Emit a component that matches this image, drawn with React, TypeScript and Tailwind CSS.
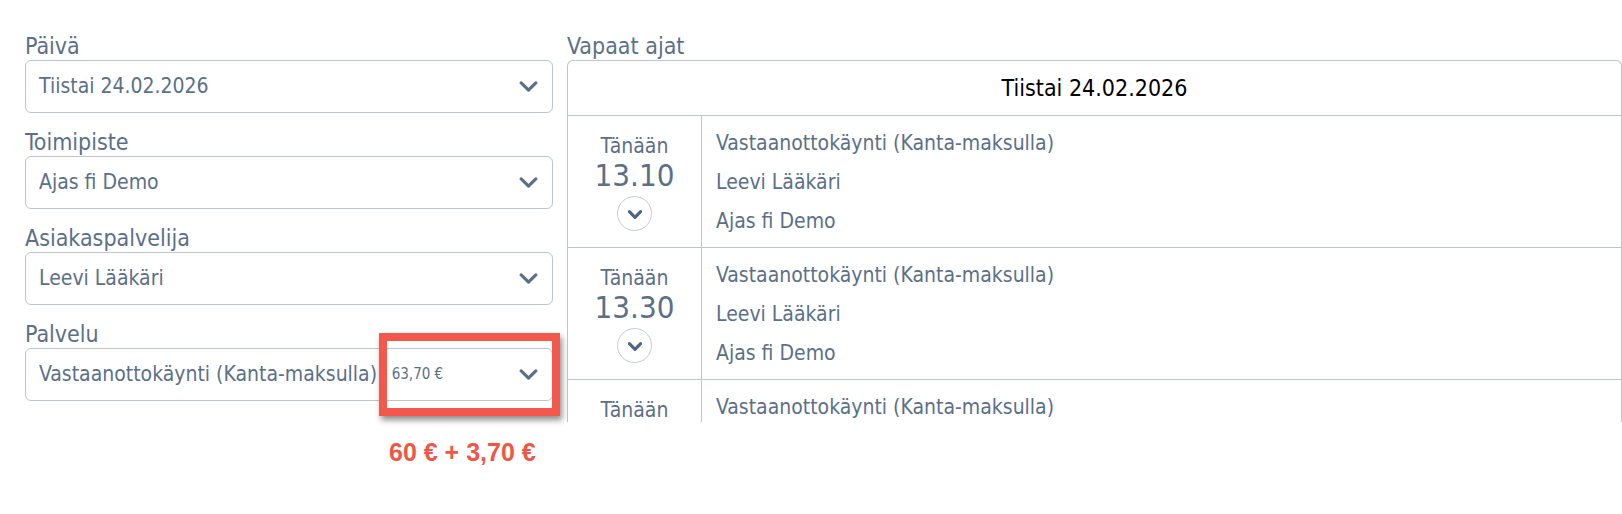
import React from 'react';

const font = { fontFamily: '"DejaVu Sans Condensed", "DejaVu Sans", sans-serif' };

function Chevron({ className, weight = 3 }: { className?: string; weight?: number }) {
  return (
    <svg className={className} viewBox="0 0 20 12" fill="none" stroke="currentColor" strokeWidth={weight} strokeLinecap="round" strokeLinejoin="round">
      <path d="M2 2l8 8 8-8" />
    </svg>
  );
}

function Field({ label, value, extra }: { label: string; value: string; extra?: string }) {
  return (
    <div className="flex flex-col">
      <label className="text-[23px] leading-[28px] text-[#5b7088]">{label}</label>
      <div className="flex h-[53px] items-center rounded-[6px] border border-[#bcc6cf] bg-white pl-[13px] pr-[14px]">
        <span className="text-[21px] text-[#5b7088] whitespace-nowrap">{value}</span>
        {extra && (
          <>
            <span className="ml-[3px] mr-[8px] text-[12px] text-[#5b7088]">|</span>
            <span className="text-[15px] text-[#5b7088]">{extra}</span>
          </>
        )}
        <Chevron className="ml-auto h-[11px] w-[19px] text-[#5b7088]" weight={3.4} />
      </div>
    </div>
  );
}

const slots = [
  { time: '13.10' },
  { time: '13.30' },
  { time: '13.50' },
];

function Slot({ time }: { time: string }) {
  return (
    <div className="flex h-[132px] border-b border-[#bcc6cf]">
      <div className="flex w-[134px] shrink-0 flex-col items-center border-r border-[#bcc6cf] pt-[18px]">
        <span className="text-[21px] leading-[24px] text-[#5b7088]">Tänään</span>
        <span className="text-[31px] leading-[34px] text-[#5b7088]">{time}</span>
        <span className="mt-[4px] flex h-[35px] w-[35px] items-center justify-center rounded-full border border-[#c3ccd4]">
          <Chevron className="mt-[2px] h-[9px] w-[14px] text-[#4f6680]" weight={4.5} />
        </span>
      </div>
      <div className="flex flex-col pl-[14px] pt-[8px] text-[21px] leading-[39px] text-[#5b7088]">
        <span>Vastaanottokäynti (Kanta-maksulla)</span>
        <span>Leevi Lääkäri</span>
        <span>Ajas fi Demo</span>
      </div>
    </div>
  );
}

export default function App() {
  return (
    <div className="relative min-h-[514px] w-[1622px] bg-white" style={font}>
      <div className="flex gap-[14px] pl-[25px] pt-[32px]">
        {/* Left: filters */}
        <div className="flex w-[528px] shrink-0 flex-col gap-[15px]">
          <Field label="Päivä" value="Tiistai 24.02.2026" />
          <Field label="Toimipiste" value="Ajas fi Demo" />
          <Field label="Asiakaspalvelija" value="Leevi Lääkäri" />
          <Field label="Palvelu" value="Vastaanottokäynti (Kanta-maksulla)" extra="63,70 €" />
        </div>

        {/* Right: free times */}
        <div className="flex flex-1 flex-col">
          <span className="text-[23px] leading-[28px] text-[#5b7088]">Vapaat ajat</span>
          <div className="h-[362px] overflow-hidden rounded-t-[6px] border-x border-t border-[#bcc6cf]">
            <div className="flex h-[55px] items-center justify-center border-b border-[#bcc6cf] text-[23px] text-black">
              Tiistai 24.02.2026
            </div>
            {slots.map((s) => (
              <Slot key={s.time} time={s.time} />
            ))}
          </div>
        </div>
      </div>

      {/* Annotation over price */}
      <div className="absolute left-[379px] top-[333px] h-[83px] w-[181px] border-[8px] border-[#f4574b] shadow-[2px_4px_6px_rgba(0,0,0,0.45)]" />
      <div
        className="absolute left-[389px] top-[437px] text-[25px] leading-[30px] font-bold text-[#f05646]"
        style={{ fontFamily: '"Liberation Sans", Arial, sans-serif' }}
      >
        60 € + 3,70 €
      </div>
    </div>
  );
}
